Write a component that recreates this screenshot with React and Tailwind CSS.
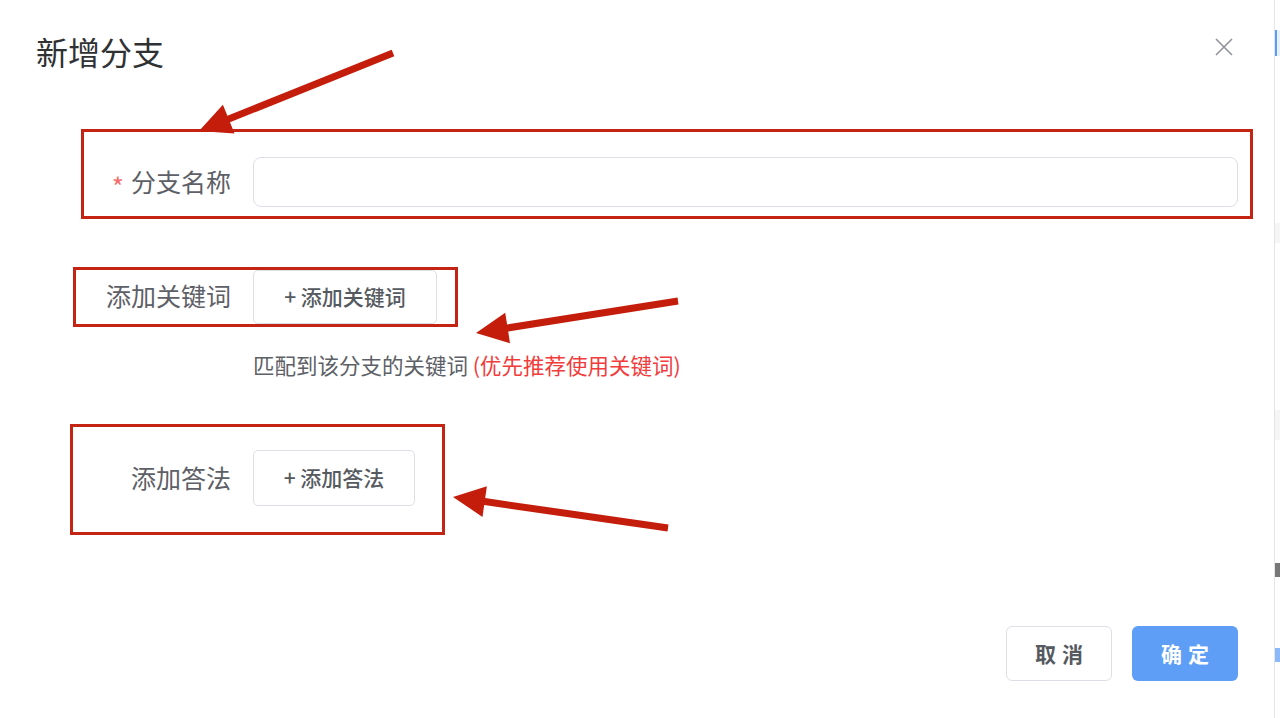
// 标注箭头：根据起点和箭尖计算多边形
function arrowPoints([x1, y1], [x2, y2], shaft = 7, headLen = 32, headW = 31) {
  const dx = x2 - x1;
  const dy = y2 - y1;
  const len = Math.hypot(dx, dy);
  const ux = dx / len;
  const uy = dy / len;
  const px = -uy;
  const py = ux;
  const bx = x2 - ux * headLen;
  const by = y2 - uy * headLen;
  const pts = [
    [x1 + px * shaft * 0.5, y1 + py * shaft * 0.5],
    [bx + px * shaft * 0.5, by + py * shaft * 0.5],
    [bx + px * headW * 0.5, by + py * headW * 0.5],
    [x2, y2],
    [bx - px * headW * 0.5, by - py * headW * 0.5],
    [bx - px * shaft * 0.5, by - py * shaft * 0.5],
    [x1 - px * shaft * 0.5, y1 - py * shaft * 0.5],
  ];
  return pts.map((p) => p.map((v) => v.toFixed(1)).join(',')).join(' ');
}

const ARROWS = [
  { from: [393, 53], to: [199, 131] },
  { from: [678, 301], to: [476, 333] },
  { from: [668, 528], to: [453, 497] },
];

const FONT = { fontFamily: '"Noto Sans CJK SC", "Noto Sans", sans-serif' };

export default function App() {
  return (
    <div className="flex w-[1280px] h-[718px] bg-white overflow-hidden" style={FONT}>
      {/* ======================== 对话框 ======================== */}
      <div className="relative w-[1274px] h-full bg-white flex flex-col">
        {/* 标题 */}
        <div className="flex items-start justify-between pl-[36px] pt-[31px] pr-[41px]">
          <h2 className="text-[32px] leading-[40px] text-[#303133]">新增分支</h2>
          <svg width="18" height="18" viewBox="0 0 18 18" className="mt-[7px]">
            <path d="M1 1 L17 17 M17 1 L1 17" stroke="#909399" strokeWidth="1.6" fill="none" />
          </svg>
        </div>

        {/* 分支名称 */}
        <div className="mt-[58px] ml-[81px] w-[1172px] h-[90px] border-[3px] border-[#c42414] flex items-start pt-[25px]">
          <div className="w-[147px] h-[50px] flex items-center justify-end">
            <span className="text-[#f56c6c] text-[26px] mr-[7px] mt-[6px]">*</span>
            <span className="text-[25px] text-[#5d6066]">分支名称</span>
          </div>
          <input
            className="ml-[22px] w-[985px] h-[50px] rounded-[8px] border border-[#dcdfe6] bg-white outline-none"
            type="text"
          />
        </div>

        {/* 添加关键词 */}
        <div className="mt-[48px] ml-[73px] w-[385px] h-[60px] border-[3px] border-[#c42414] flex items-stretch">
          <div className="w-[155px] flex items-center justify-end text-[25px] text-[#5d6066] pb-[3px]">添加关键词</div>
          <button className="ml-[22px] w-[184px] rounded-[5px] border border-[#dcdfe6] bg-white text-[21px] font-medium text-[#555a60]">
            + 添加关键词
          </button>
        </div>
        <p className="mt-[24px] ml-[253px] text-[21.5px] leading-[28px] text-[#5d6066]">
          匹配到该分支的关键词 <span className="text-[#f23b3b]">(优先推荐使用关键词)</span>
        </p>

        {/* 添加答法 */}
        <div className="mt-[45px] ml-[70px] w-[375px] h-[111px] border-[3px] border-[#c42414] flex items-start pt-[23px]">
          <div className="w-[158px] h-[56px] flex items-center justify-end text-[25px] text-[#5d6066]">添加答法</div>
          <button className="ml-[22px] w-[162px] h-[56px] rounded-[5px] border border-[#dcdfe6] bg-white text-[21px] font-medium text-[#555a60]">
            + 添加答法
          </button>
        </div>

        {/* 底部按钮 */}
        <div className="mt-[91px] flex justify-end gap-[20px] pr-[36px]">
          <button className="w-[106px] h-[55px] rounded-[6px] border border-[#dcdfe6] bg-white text-[21px] font-bold text-[#555a60] tracking-[6px] pl-[6px]">
            取消
          </button>
          <button className="w-[106px] h-[55px] rounded-[6px] bg-[#5e9ef7] text-[21px] font-bold text-white tracking-[6px] pl-[6px]">
            确定
          </button>
        </div>

        {/* 标注箭头 */}
        <svg className="absolute inset-0 pointer-events-none" width="1274" height="718">
          {ARROWS.map((a, i) => (
            <polygon key={i} points={arrowPoints(a.from, a.to)} fill="#c41d0c" />
          ))}
        </svg>
      </div>

      {/* ======================== 背景页边缘 ======================== */}
      <div className="flex-1 h-full border-l border-[#e4e4e4] bg-white flex flex-col">
        <div className="mt-[30px] h-[26px] bg-[#e8f1fd] border-l-2 border-[#5b9cf8]" />
        <div className="mt-[167px] h-[20px] bg-[#f5f5f5]" />
        <div className="mt-[167px] h-[30px] bg-[#f5f5f5]" />
        <div className="mt-[123px] h-[14px] bg-[#777]" />
        <div className="mt-[71px] h-[14px] bg-[#8ab8f8]" />
      </div>
    </div>
  );
}
